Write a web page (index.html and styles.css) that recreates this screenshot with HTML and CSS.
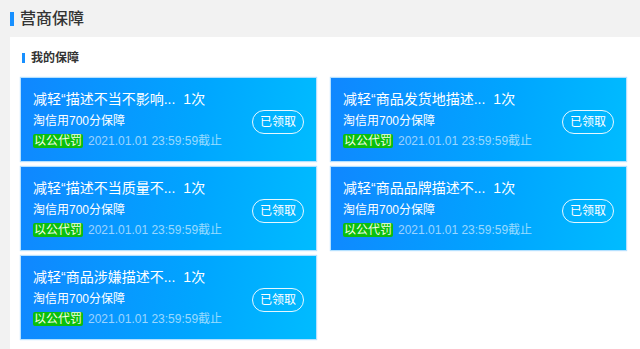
FILE: index.html
```html
<!DOCTYPE html>
<html lang="zh-CN">
<head>
<meta charset="utf-8">
<title>营商保障</title>
<link rel="stylesheet" href="styles.css">
</head>
<body>
<header class="top"><span class="bar"></span><h1>营商保障</h1></header>
<main class="panel">
  <h2 class="sec-title"><span class="mark"></span>我的保障</h2>
  <div class="grid">
    <div class="card">
      <div class="info">
        <div class="title"><span class="name">减轻“描述不当不影响...</span><span class="count">1次</span></div>
        <div class="sub">淘信用700分保障</div>
        <div class="meta"><span class="badge">以公代罚</span><span class="date">2021.01.01 23:59:59截止</span></div>
      </div>
      <span class="btn">已领取</span>
    </div>
    <div class="card">
      <div class="info">
        <div class="title"><span class="name">减轻“商品发货地描述...</span><span class="count">1次</span></div>
        <div class="sub">淘信用700分保障</div>
        <div class="meta"><span class="badge">以公代罚</span><span class="date">2021.01.01 23:59:59截止</span></div>
      </div>
      <span class="btn">已领取</span>
    </div>
    <div class="card">
      <div class="info">
        <div class="title"><span class="name">减轻“描述不当质量不...</span><span class="count">1次</span></div>
        <div class="sub">淘信用700分保障</div>
        <div class="meta"><span class="badge">以公代罚</span><span class="date">2021.01.01 23:59:59截止</span></div>
      </div>
      <span class="btn">已领取</span>
    </div>
    <div class="card">
      <div class="info">
        <div class="title"><span class="name">减轻“商品品牌描述不...</span><span class="count">1次</span></div>
        <div class="sub">淘信用700分保障</div>
        <div class="meta"><span class="badge">以公代罚</span><span class="date">2021.01.01 23:59:59截止</span></div>
      </div>
      <span class="btn">已领取</span>
    </div>
    <div class="card">
      <div class="info">
        <div class="title"><span class="name">减轻“商品涉嫌描述不...</span><span class="count">1次</span></div>
        <div class="sub">淘信用700分保障</div>
        <div class="meta"><span class="badge">以公代罚</span><span class="date">2021.01.01 23:59:59截止</span></div>
      </div>
      <span class="btn">已领取</span>
    </div>
  </div>
</main>
</body>
</html>
```

FILE: styles.css
```css
* { box-sizing: border-box; }
html, body { margin: 0; padding: 0; }
body {
  background: #f2f2f2;
  font-family: "Liberation Sans", "Noto Sans CJK SC", sans-serif;
  color: #333;
  overflow: hidden;
}
.top {
  height: 37px;
  display: flex;
  align-items: center;
  padding-left: 10px;
}
.top .bar {
  width: 4px;
  height: 14px;
  background: #1890ff;
  margin-right: 6px;
}
.top h1 {
  margin: 0;
  font-size: 16px;
  font-weight: 500;
  line-height: 20px;
  color: #333;
}
.panel {
  background: #fff;
  margin-left: 10px;
  padding: 14px 0 20px 11px;
  min-height: 320px;
}
.sec-title {
  margin: 0 0 13px 0;
  padding-left: 1px;
  display: flex;
  align-items: center;
  font-size: 12px;
  font-weight: bold;
  line-height: 14px;
  color: #333;
}
.sec-title .mark {
  width: 3px;
  height: 10px;
  background: #1890ff;
  margin-right: 6px;
}
.grid {
  display: grid;
  grid-template-columns: 295px 295px;
  grid-auto-rows: 83px;
  column-gap: 15px;
  row-gap: 6px;
}
.card {
  background: linear-gradient(100deg, #1087ff 0%, #00a6ff 60%, #00bcff 100%);
  box-shadow: 0 0 1px 1px rgba(120, 200, 255, 0.55);
  padding: 11px 12px 0 12px;
  display: flex;
  justify-content: space-between;
  align-items: flex-start;
  color: #fff;
}
.info {
  display: flex;
  flex-direction: column;
}
.title {
  font-size: 14px;
  line-height: 20px;
  white-space: nowrap;
}
.title .count { margin-left: 8px; }
.sub {
  margin-top: 4px;
  font-size: 12px;
  line-height: 17px;
}
.meta {
  margin-top: 4px;
  display: flex;
  align-items: center;
  font-size: 12px;
  line-height: 14px;
}
.badge {
  background: #0cbf0c;
  color: #f6ffe6;
  padding: 0 1px;
  border-radius: 2px;
  line-height: 14px;
}
.date {
  margin-left: 5px;
  color: rgba(255, 255, 255, 0.6);
}
.btn {
  margin-top: 21px;
  width: 52px;
  height: 24px;
  border: 1px solid rgba(255, 255, 255, 0.9);
  border-radius: 12px;
  font-size: 12px;
  line-height: 22px;
  text-align: center;
  color: #fff;
}
```
